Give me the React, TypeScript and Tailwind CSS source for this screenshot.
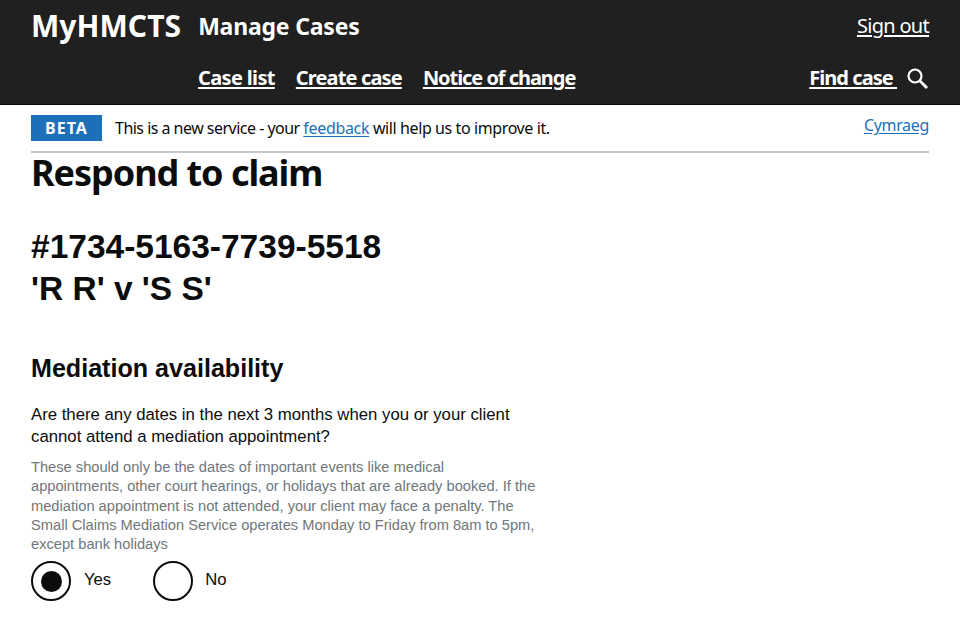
export default function App() {
  const gds = "[font-family:'Noto_Sans',sans-serif]";
  const nav = "font-bold text-[20px] leading-[24px] text-white underline underline-offset-2";
  return (
    <div className="h-[640px] w-[960px] overflow-hidden bg-white font-['Liberation_Sans',sans-serif] text-[#0b0c0c]">
      <header className={`${gds} h-[105px] bg-[#202020] border-b border-[#0b0c0c] pl-[31px] pr-[31px] text-white flex flex-col`}>
        <div className="flex items-center h-[52px]">
          <span className="font-bold text-[30px] leading-[36px] tracking-[0.05px]">MyHMCTS</span>
          <span className="ml-[17px] font-bold text-[23px] leading-[28px] tracking-[-0.2px]">Manage Cases</span>
          <a className="ml-auto text-[20px] leading-[24px] underline underline-offset-2 tracking-[-0.7px]">Sign out</a>
        </div>
        <div className="flex items-center h-[52px] pl-[167px]">
          <a className={`${nav} tracking-[-0.65px]`}>Case list</a>
          <a className={`${nav} ml-[21px] tracking-[-0.85px]`}>Create case</a>
          <a className={`${nav} ml-[21px] tracking-[-1.05px]`}>Notice of change</a>
          <a className={`${nav} ml-auto whitespace-pre tracking-[-0.95px]`}>Find case </a>
          <svg className="ml-[8px]" width="24" height="24" viewBox="0 0 24 24" fill="none" stroke="white">
            <circle cx="10" cy="10" r="6.5" strokeWidth="2.2" />
            <path d="M14.8 14.8 22 22" strokeWidth="2.8" />
          </svg>
        </div>
      </header>
      <div className={`${gds} mx-[31px] h-[48px] border-b-2 border-[#c4c6c7] flex items-start`}>
        <span className="mt-[10px] h-[26px] w-[71px] bg-[#1d70b8] text-white font-bold text-[16px] leading-[26px] text-center tracking-[1px]">BETA</span>
        <p className="ml-[13px] mt-[12px] text-[16px] leading-[22px] tracking-[-0.4px]">
          <span className="tracking-[-0.52px]">This is a new service - your </span><a className="text-[#1d70b8] underline underline-offset-2 tracking-[-0.32px]">feedback</a> will help us to improve it.
        </p>
        <a className="ml-auto mt-[9px] text-[16px] leading-[22px] tracking-[-0.32px] text-[#1d70b8] underline underline-offset-2">Cymraeg</a>
      </div>
      <main className="pl-[31px]">
        <h1 className={`${gds} font-bold text-[36px] leading-[42px] -mt-[1px] tracking-[-1.05px]`}>Respond to claim</h1>
        <h2 className="mt-[32px] font-bold text-[33.5px] leading-[42px]">#1734-5163-7739-5518<br />'R R' v 'S S'</h2>
        <h3 className="mt-[43px] font-bold text-[25.1px] leading-[30px]">Mediation availability</h3>
        <p className="mt-[21px] w-[500px] text-[16.75px] leading-[21.5px]">Are there any dates in the next 3 months when you or your client cannot attend a mediation appointment?</p>
        <p className="mt-[11px] w-[506px] text-[14.66px] leading-[19.3px] text-[#6f777b]">These should only be the dates of important events like medical appointments, other court hearings, or holidays that are already booked. If the mediation appointment is not attended, your client may face a penalty. The Small Claims Mediation Service operates Monday to Friday from 8am to 5pm, except bank holidays</p>
        <div className="mt-[7px] flex items-center">
          <span className="h-[40px] w-[40px] rounded-full border-2 border-[#0b0c0c] flex items-center justify-center">
            <span className="h-[21px] w-[21px] rounded-full bg-[#0b0c0c]" />
          </span>
          <span className="ml-[13px] mb-[4px] text-[16.67px]">Yes</span>
          <span className="ml-[42px] h-[40px] w-[40px] rounded-full border-2 border-[#0b0c0c]" />
          <span className="ml-[12px] mb-[4px] text-[16.67px]">No</span>
        </div>
      </main>
    </div>
  );
}
